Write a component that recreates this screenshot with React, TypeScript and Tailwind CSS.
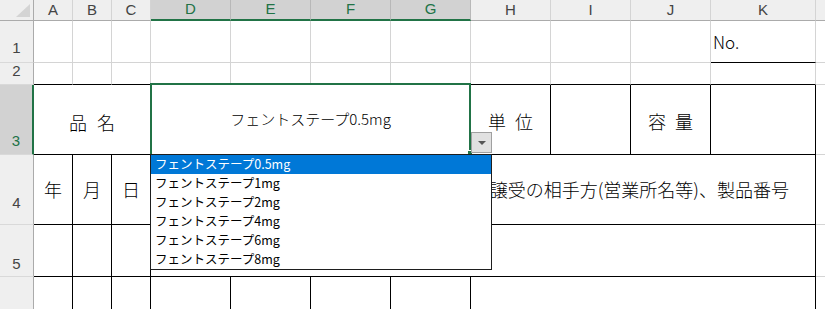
import React from 'react'

const cols = ['A', 'B', 'C', 'D', 'E', 'F', 'G', 'H', 'I', 'J', 'K', '']
const selectedCols = ['D', 'E', 'F', 'G']

const items = [
  'フェントステープ0.5mg',
  'フェントステープ1mg',
  'フェントステープ2mg',
  'フェントステープ4mg',
  'フェントステープ6mg',
  'フェントステープ8mg',
]

function Cell({ className = '', children }: { className?: string; children?: React.ReactNode }) {
  return <div className={'flex items-center justify-center border-r border-b whitespace-nowrap ' + className}>{children}</div>
}

function RowHead({ n, className = '' }: { n?: number; className?: string }) {
  return (
    <div
      className={
        'flex items-end justify-center border-r border-b border-b-[#d9d9d9] text-[15px] font-["Liberation_Sans",sans-serif] ' +
        className
      }
    >
      {n}
    </div>
  )
}

export default function App() {
  return (
    <div className="relative w-[825px] h-[309px] overflow-hidden bg-white font-['Noto_Sans_CJK_JP',sans-serif] text-black">
      <div className="grid grid-cols-[34px_39px_39px_39px_80px_80px_80px_80px_80px_80px_80px_105px_40px] grid-rows-[21px_42px_22px_70px_70px_52px_60px]">
        {/* corner */}
        <div className="relative bg-[#efefef] border-r border-b border-r-[#ababab] border-b-[#ababab]">
          <div className="absolute right-[3px] bottom-[3px] w-0 h-0 border-l-[14px] border-l-transparent border-b-[13px] border-b-[#d4d4d4]" />
        </div>

        {/* column headers */}
        {cols.map((c, i) =>
          selectedCols.includes(c) ? (
            <div
              key={i}
              className="flex items-center justify-center bg-[#d2d2d2] border-r border-r-[#b8b8b8] border-b-2 border-b-[#217346] text-[15px] text-[#217346] font-['Liberation_Sans',sans-serif]"
            >
              {c}
            </div>
          ) : (
            <div
              key={i}
              className="flex items-center justify-center bg-[#efefef] border-r border-r-[#d4d4d4] border-b border-b-[#ababab] text-[15px] text-[#444] font-['Liberation_Sans',sans-serif]"
            >
              {c}
            </div>
          )
        )}

        {/* row 1 */}
        <RowHead n={1} className="bg-[#efefef] border-r-[#ababab] text-[#444] pb-[3px]" />
        <Cell className="border-[#d4d4d4]" />
        <Cell className="border-[#d4d4d4]" />
        <Cell className="border-[#d4d4d4]" />
        <Cell className="border-[#d4d4d4]" />
        <Cell className="border-[#d4d4d4]" />
        <Cell className="border-[#d4d4d4]" />
        <Cell className="border-[#d4d4d4]" />
        <Cell className="border-[#d4d4d4]" />
        <Cell className="border-[#d4d4d4]" />
        <Cell className="border-[#d4d4d4]" />
        <Cell className="justify-start pl-[2px] pt-[1px] border-r-[#d4d4d4] border-b-black text-[17px] font-light">No.</Cell>
        <Cell className="border-[#d4d4d4]" />

        {/* row 2 */}
        <RowHead n={2} className="bg-[#efefef] border-r-[#ababab] text-[#444] pb-[2px]" />
        <Cell className="border-r-[#d4d4d4] border-b-black" />
        <Cell className="border-r-[#d4d4d4] border-b-black" />
        <Cell className="border-r-[#d4d4d4] border-b-black" />
        <Cell className="border-r-[#d4d4d4] border-b-black" />
        <Cell className="border-r-[#d4d4d4] border-b-black" />
        <Cell className="border-r-[#d4d4d4] border-b-black" />
        <Cell className="border-r-[#d4d4d4] border-b-black" />
        <Cell className="border-r-[#d4d4d4] border-b-black" />
        <Cell className="border-r-[#d4d4d4] border-b-black" />
        <Cell className="border-r-[#d4d4d4] border-b-black" />
        <Cell className="border-r-[#d4d4d4] border-b-black" />
        <Cell className="border-[#d4d4d4]" />

        {/* row 3 */}
        <RowHead n={3} className="bg-[#d2d2d2] border-r-2 border-r-[#217346] text-[#217346] pb-[2px]" />
        <Cell className="col-span-3 border-black pt-[6px] text-[18px] font-light [word-spacing:6px]">品 名</Cell>
        <Cell className="col-span-4 border-black text-[15px] font-light">フェントステープ0.5mg</Cell>
        <Cell className="border-black pt-[4px] text-[18px] font-light [word-spacing:5px]">単 位</Cell>
        <Cell className="border-black" />
        <Cell className="border-black pt-[4px] text-[18px] font-light [word-spacing:5px]">容 量</Cell>
        <Cell className="border-black" />
        <Cell className="border-[#d4d4d4]" />

        {/* row 4 */}
        <RowHead n={4} className="bg-[#efefef] border-r-[#ababab] text-[#444] pb-[10px]" />
        <Cell className="border-black text-[18px] font-light">年</Cell>
        <Cell className="border-black text-[18px] font-light">月</Cell>
        <Cell className="border-black text-[18px] font-light">日</Cell>
        <Cell className="col-span-8 justify-end pr-[26px] border-black text-[18px] font-light overflow-hidden">
          譲受の相手方(営業所名等)、製品番号
        </Cell>
        <Cell className="border-[#d4d4d4]" />

        {/* row 5 */}
        <RowHead n={5} className="bg-[#efefef] border-r-[#ababab] text-[#444] pb-[1px]" />
        <Cell className="border-black" />
        <Cell className="border-black" />
        <Cell className="border-black" />
        <Cell className="col-span-8 border-black" />
        <Cell className="border-[#d4d4d4]" />

        {/* row 6 */}
        <RowHead className="bg-[#efefef] border-r-[#ababab] text-[#444]" />
        <Cell className="border-black" />
        <Cell className="border-black" />
        <Cell className="border-black" />
        <Cell className="border-black" />
        <Cell className="border-black" />
        <Cell className="border-black" />
        <Cell className="border-black" />
        <Cell className="col-span-4 border-black" />
        <Cell className="border-[#d4d4d4]" />
      </div>

      {/* active selection D3:G3 */}
      <div className="absolute left-[150px] top-[83px] w-[321px] h-[73px] border-2 border-[#217346]" />
      <div className="absolute left-[467px] top-[150px] w-[6px] h-[6px] bg-[#217346] border border-white" />

      {/* validation dropdown button */}
      <div className="absolute left-[471px] top-[132px] w-[21px] h-[21px] flex items-center justify-center bg-[#e1e1e1] border border-[#a0a0a0]">
        <div className="w-0 h-0 border-l-[4px] border-r-[4px] border-t-[4px] border-l-transparent border-r-transparent border-t-[#555]" />
      </div>

      {/* validation list */}
      <div className="absolute left-[150px] top-[154px] w-[342px] h-[116px] bg-white border border-[#1e1e1e] flex flex-col">
        {items.map((item, i) => (
          <div
            key={item}
            className={
              i === 0
                ? 'h-[19px] flex items-center pl-[4px] bg-[#0078d7] text-white text-[12.5px]'
                : 'h-[19px] flex items-center pl-[4px] text-black text-[12.5px]'
            }
          >
            {item}
          </div>
        ))}
      </div>
    </div>
  )
}
